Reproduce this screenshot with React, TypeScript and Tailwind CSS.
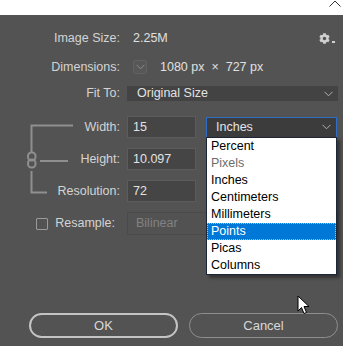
import { FaCog } from "react-icons/fa";

const units = ["Percent", "Pixels", "Inches", "Centimeters", "Millimeters", "Points", "Picas", "Columns"];

function Chevron({ className = "" }: { className?: string }) {
  return (
    <svg width="9" height="6" viewBox="0 0 9 6" className={className}>
      <polyline points="0.5,0.8 4.5,4.8 8.5,0.8" fill="none" stroke="currentColor" strokeWidth="1" />
    </svg>
  );
}

function Label({ children }: { children: React.ReactNode }) {
  return <div className="w-[120px] shrink-0 text-right">{children}</div>;
}

function NumberBox({ value }: { value: string }) {
  return (
    <div className="ml-[7px] flex h-[22px] w-[69px] items-center border border-[#5c5c5c] bg-[#454545] pl-[5px] text-[#e2e2e2]">
      {value}
    </div>
  );
}

export default function App() {
  return (
    <div className="relative h-[346px] w-[343px] overflow-hidden bg-white font-['Liberation_Sans',Arial,sans-serif]">
      <div className="flex h-[15px] justify-end pr-[2px]">
        <svg width="12" height="7" viewBox="0 0 12 7" className="text-[#333]">
          <polyline points="0.5,6.5 6,1 11.5,6.5" fill="none" stroke="currentColor" strokeWidth="1" />
        </svg>
      </div>

      <div className="relative h-[331px] bg-[#535353] pt-[13px] text-[12.5px] text-[#d4d4d4]">
        <div className="flex h-[20px] items-center">
          <Label>Image Size:</Label>
          <span className="ml-[13px] text-[#e0e0e0]">2.25M</span>
          <div className="ml-auto mr-[8px] flex items-end gap-[2px] text-[#d0d0d0]">
            <FaCog size={11} />
            <span className="mb-[1px] h-[1.5px] w-[3px] bg-[#d0d0d0]" />
          </div>
        </div>

        <div className="mt-[9px] flex h-[20px] items-center">
          <Label>Dimensions:</Label>
          <div className="ml-[13px] flex h-[14px] w-[14px] items-center justify-center rounded-[2px] border border-[#626262] bg-[#575757] text-[#8c8c8c]">
            <Chevron />
          </div>
          <span className="ml-[13px] whitespace-pre text-[#e0e0e0]">1080 px  ×  727 px</span>
        </div>

        <div className="mt-[9px] flex h-[15px] items-center">
          <Label>Fit To:</Label>
          <div className="ml-[7px] flex h-[15px] w-[211px] items-center justify-between bg-[#434343] pl-[10px] pr-[5px] text-[#e2e2e2]">
            <span>Original Size</span>
            <Chevron className="text-[#b0b0b0]" />
          </div>
        </div>

        <div className="relative mt-[15px] flex flex-col gap-[10px]">
          <svg width="80" height="86" viewBox="0 0 80 86" className="absolute left-0 top-0 text-[#8f8f8f]">
            <polyline points="73,9.5 31.5,9.5 31.5,36" fill="none" stroke="currentColor" strokeWidth="2" />
            <line x1="40" y1="45" x2="68" y2="45" stroke="currentColor" strokeWidth="2" />
            <polyline points="31.5,55 31.5,76.5 47,76.5" fill="none" stroke="currentColor" strokeWidth="2" />
            <rect x="28" y="36.5" width="7.5" height="8" rx="3.5" fill="none" stroke="currentColor" strokeWidth="2" />
            <rect x="28" y="43.5" width="7.5" height="8" rx="3.5" fill="none" stroke="currentColor" strokeWidth="2" />
          </svg>

          <div className="flex h-[22px] items-center">
            <Label>Width:</Label>
            <NumberBox value="15" />
            <div className="ml-[10px] flex h-[21px] w-[131px] items-center justify-between border border-[#2d6fc4] bg-[#3c3c3c] pl-[9px] pr-[5px] text-[#e4e4e4]">
              <span>Inches</span>
              <Chevron className="text-[#b0b0b0]" />
            </div>
          </div>
          <div className="flex h-[22px] items-center">
            <Label>Height:</Label>
            <NumberBox value="10.097" />
          </div>
          <div className="flex h-[22px] items-center">
            <Label>Resolution:</Label>
            <NumberBox value="72" />
          </div>
          <div className="flex h-[23px] items-center">
            <div className="flex w-[120px] shrink-0 items-center justify-end gap-[7px] pr-[5px]">
              <span className="h-[12px] w-[12px] rounded-[1px] border border-[#9a9a9a]" />
              <span>Resample:</span>
            </div>
            <div className="ml-[7px] flex h-[23px] w-[211px] items-center border border-[#4a4a4a] bg-[#525252] pl-[8px] text-[#828282]">
              Bilinear
            </div>
          </div>
        </div>

        <div className="mt-[78px] flex gap-[11px] pl-[29px] text-[13px]">
          <button className="flex h-[25px] w-[149px] items-center justify-center rounded-full border-2 border-[#c4c4c4] text-[#d8d8d8]">
            OK
          </button>
          <button className="flex h-[25px] w-[149px] items-center justify-center rounded-full border border-[#8e8e8e] text-[#d8d8d8]">
            Cancel
          </button>
        </div>

        <div className="absolute left-[206px] top-[122px] w-[131px] border border-[#1c2636] bg-white text-[12.5px] text-black shadow-[3px_3px_3px_rgba(0,0,0,0.4)]">
          {units.map((u) => (
            <div
              key={u}
              className={
                u === "Points"
                  ? "flex h-[17px] items-center border border-dotted border-[#9ac4f0] bg-[#0078d7] pl-[3px] text-white"
                  : u === "Pixels"
                  ? "flex h-[17px] items-center pl-[4px] text-[#6d6d6d]"
                  : "flex h-[17px] items-center pl-[4px]"
              }
            >
              {u}
            </div>
          ))}
        </div>

        <svg width="14" height="21" viewBox="0 0 14 21" className="absolute left-[297px] top-[280px]">
          <path d="M1 1 L1 16 L4.5 12.5 L7 18.5 L9.5 17.5 L7 11.5 L12 11.5 Z" fill="white" stroke="black" strokeWidth="1" strokeLinejoin="round" />
        </svg>
      </div>
    </div>
  );
}
